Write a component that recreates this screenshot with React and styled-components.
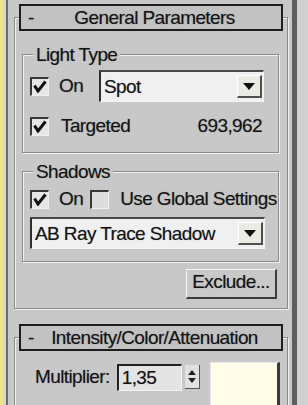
import React from 'react';
import styled, { createGlobalStyle } from 'styled-components';

const GlobalStyle = createGlobalStyle`
  html, body {
    margin: 0;
    padding: 0;
    background: #c8c8c8;
  }
  body {
    font-family: "Liberation Sans", Arial, sans-serif;
    color: #141414;
  }
`;

const Window = styled.div`
  display: flex;
  width: 308px;
  height: 405px;
  overflow: hidden;
  background: #d2d2d2;
`;

const Edge = styled.div`
  flex-shrink: 0;
  width: ${p => p.$w}px;
  background: ${p => p.$c};
`;

const Panel = styled.div`
  flex-shrink: 0;
  width: 284px;
  box-sizing: border-box;
  padding: 17px 4px 0 6px;
  display: flex;
  flex-direction: column;
  background: #c8c8c8;
  font-size: 19px;
  line-height: 22px;
  letter-spacing: -0.6px;
  text-shadow: 0 0 1px rgba(0, 0, 0, 0.35);
`;

const Rollout = styled.section`
  display: flex;
  flex-direction: column;
  margin-top: ${p => p.$top || 0}px;
  padding-bottom: ${p => p.$bottom || 0}px;
  border: 1px solid #8a8a8a;
  box-shadow: inset 1px 1px 0 #f2f2f2, 1px 1px 0 #f2f2f2;
`;

const RolloutHeader = styled.div`
  display: grid;
  grid-template-columns: 20px 1fr 20px;
  align-items: center;
  height: 27px;
  box-sizing: border-box;
  margin: -14px 4px 0 4px;
  padding-left: 7px;
  border: 2px solid #1e1e1e;
  background: #c2c2c2;
  white-space: nowrap;
`;

const Dash = styled.span`
  font-size: 19px;
`;

const HeaderTitle = styled.span`
  text-align: center;
`;

const Group = styled.fieldset`
  display: flex;
  flex-direction: column;
  margin: ${p => p.$top}px 8px 0 7px;
  padding: 0 14px ${p => p.$bottom}px 7px;
  min-width: 0;
  border: 1px solid #8a8a8a;
  box-shadow: inset 1px 1px 0 #f2f2f2, 1px 1px 0 #f2f2f2;
`;

const Legend = styled.legend`
  float: left;
  align-self: flex-start;
  margin: -11px 0 0 3px;
  padding: 0 3px;
  background: #c8c8c8;
  white-space: nowrap;
`;

const Row = styled.div`
  display: flex;
  align-items: center;
  height: ${p => p.$h || 22}px;
  margin-top: ${p => p.$top || 0}px;
  white-space: nowrap;
`;

const Box = styled.span`
  flex-shrink: 0;
  display: flex;
  align-items: center;
  justify-content: center;
  width: 19px;
  height: 19px;
  box-sizing: border-box;
  border-top: 2px solid #383838;
  border-left: 2px solid #383838;
  border-right: 1px solid #f2f2f2;
  border-bottom: 1px solid #f2f2f2;
  background: ${p => (p.$checked ? '#e6e6e6' : '#dcdcdc')};
  margin-left: ${p => p.$left || 0}px;
`;

const Label = styled.span`
  margin-left: ${p => p.$left || 0}px;
`;

const Value = styled.span`
  margin-left: auto;
  margin-right: 2px;
`;

const Select = styled.div`
  display: flex;
  align-items: center;
  justify-content: space-between;
  box-sizing: border-box;
  width: ${p => p.$w}px;
  height: 32px;
  margin-left: ${p => (p.$auto ? 'auto' : '0')};
  margin-top: ${p => p.$top || 0}px;
  padding: 0 1px 0 3px;
  border-top: 2px solid #4a4a4a;
  border-left: 2px solid #2e2e2e;
  border-right: 1px solid #f4f4f4;
  border-bottom: 1px solid #f4f4f4;
  background: #f0f0f0;
  white-space: nowrap;
`;

const ArrowButton = styled.span`
  display: flex;
  align-items: center;
  justify-content: center;
  width: 25px;
  height: 23px;
  box-sizing: border-box;
  border-top: 1px solid #ffffff;
  border-left: 1px solid #ffffff;
  border-right: 2px solid #505050;
  border-bottom: 2px solid #505050;
  background: #ecebe3;
`;

const Button = styled.div`
  align-self: flex-end;
  display: flex;
  align-items: center;
  justify-content: center;
  width: 91px;
  height: 30px;
  box-sizing: border-box;
  margin: 7px 10px 0 0;
  padding-bottom: 3px;
  border-top: 1px solid #f4f4f4;
  border-left: 1px solid #f4f4f4;
  border-right: 2px solid #3c3c3c;
  border-bottom: 2px solid #3c3c3c;
  background: #c9c9c9;
`;

const ParamRow = styled.div`
  display: flex;
  align-items: flex-start;
  margin-top: 11px;
  padding-left: 20px;
  white-space: nowrap;
`;

const ParamLabel = styled.span`
  margin-top: 4px;
`;

const NumberField = styled.div`
  display: flex;
  align-items: center;
  width: 65px;
  height: 27px;
  box-sizing: border-box;
  margin: 2px 0 0 7px;
  padding-left: 3px;
  border-top: 2px solid #222;
  border-left: 2px solid #222;
  border-right: 1px solid #f2f2f2;
  border-bottom: 1px solid #f2f2f2;
  background: #e4e4e4;
`;

const Spinner = styled.div`
  display: flex;
  flex-direction: column;
  align-items: center;
  justify-content: center;
  gap: 3px;
  width: 15px;
  height: 24px;
  box-sizing: border-box;
  margin: 3px 0 0 3px;
  border-right: 1px solid #555;
  border-bottom: 1px solid #555;
  background: #e0e0dc;
`;

const Swatch = styled.div`
  width: 70px;
  height: 50px;
  box-sizing: border-box;
  margin-left: 10px;
  border-left: 1px solid #e8e8e8;
  border-top: 1px solid #e8e8e8;
  border-right: 3px solid #3a3a3a;
  background: #fffde8;
`;

const Check = () => (
  <svg width="14" height="13" viewBox="0 0 14 13">
    <path d="M1.5 5.5 L5 11 L12.5 1.5" fill="none" stroke="#111" strokeWidth="3" />
  </svg>
);

const Triangle = ({ up }) => (
  <svg width="12" height="7" viewBox="0 0 12 7">
    <path d={up ? 'M0 7 L6 0 L12 7 Z' : 'M0 0 L12 0 L6 7 Z'} fill="#111" />
  </svg>
);

const SmallArrow = ({ up }) => (
  <svg width="8" height="5" viewBox="0 0 8 5">
    <path d={up ? 'M0 5 L4 0 L8 5 Z' : 'M0 0 L8 0 L4 5 Z'} fill="#222" />
  </svg>
);

const CheckBox = ({ checked, left }) => (
  <Box $checked={checked} $left={left}>{checked && <Check />}</Box>
);

const Dropdown = ({ value, width, auto, top }) => (
  <Select $w={width} $auto={auto} $top={top}>
    <span>{value}</span>
    <ArrowButton>
      <Triangle />
    </ArrowButton>
  </Select>
);

export default function App() {
  return (
    <>
      <GlobalStyle />
      <Window>
        <Edge $w={3} $c="#ebe488" />
        <Edge $w={3} $c="#d6d6d6" />
        <Edge $w={2} $c="#6c6c6c" />
        <Panel>
          <Rollout $bottom={9}>
            <RolloutHeader>
              <Dash>-</Dash>
              <HeaderTitle>General Parameters</HeaderTitle>
            </RolloutHeader>

            <Group $top={23} $bottom={15}>
              <Legend>Light Type</Legend>
              <Row $h={32} $top={4}>
                <CheckBox checked />
                <Label $left={10}>On</Label>
                <Dropdown value="Spot" width={165} auto />
              </Row>
              <Row $top={13}>
                <CheckBox checked />
                <Label $left={12}>Targeted</Label>
                <Value>693,962</Value>
              </Row>
            </Group>

            <Group $top={18} $bottom={12}>
              <Legend>Shadows</Legend>
              <Row $top={5}>
                <CheckBox checked />
                <Label $left={10}>On</Label>
                <CheckBox left={7} />
                <Label $left={11}>Use Global Settings</Label>
              </Row>
              <Dropdown value="AB Ray Trace Shadow" width={235} top={7} />
            </Group>

            <Button>Exclude...</Button>
          </Rollout>

          <Rollout $top={28}>
            <RolloutHeader>
              <Dash>-</Dash>
              <HeaderTitle>Intensity/Color/Attenuation</HeaderTitle>
            </RolloutHeader>
            <ParamRow>
              <ParamLabel>Multiplier:</ParamLabel>
              <NumberField>1,35</NumberField>
              <Spinner>
                <SmallArrow up />
                <SmallArrow />
              </Spinner>
              <Swatch />
            </ParamRow>
          </Rollout>
        </Panel>
        <Edge $w={5} $c="#5e5e5e" />
        <Edge $w={11} $c="#d0d0d0" />
      </Window>
    </>
  );
}
